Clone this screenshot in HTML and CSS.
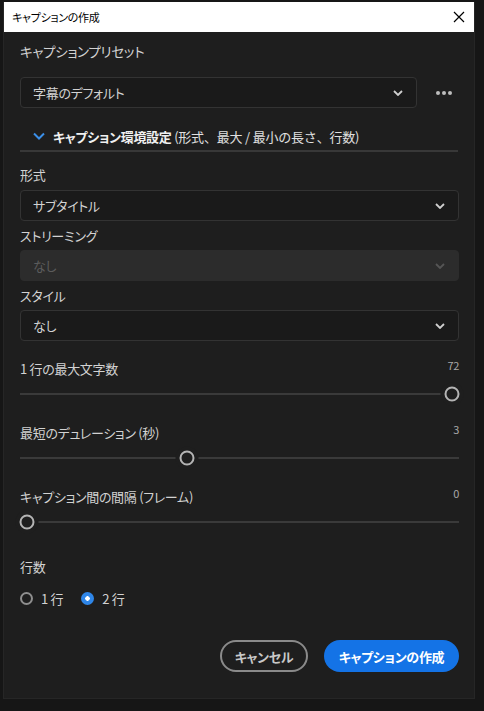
FILE: index.html
```html
<!DOCTYPE html>
<html lang="ja">
<head>
  <meta charset="UTF-8">
  <title>キャプションの作成</title>
  <link rel="stylesheet" href="styles.css">
</head>
<body>

  <div class="dialog">
    <div class="titlebar">
      <span>キャプションの作成</span>
      <svg class="close" width="12" height="12" viewBox="0 0 12 12">
        <path d="M1 1 L11 11 M11 1 L1 11" stroke="#000" stroke-width="1.2"/>
      </svg>
    </div>

    <div class="content">
      <div class="label preset-label">キャプションプリセット</div>
      <div class="preset-row">
        <div class="select preset-select">
          <span>字幕のデフォルト</span>
          <svg class="chev" width="10" height="6" viewBox="0 0 10 6"><path d="M1 1 L5 5 L9 1" fill="none" stroke="#d0d0d0" stroke-width="1.8"/></svg>
        </div>
        <div class="more"><i></i><i></i><i></i></div>
      </div>

      <div class="section-head">
        <svg width="12" height="8" viewBox="0 0 12 8"><path d="M1 1.5 L6 6.5 L11 1.5" fill="none" stroke="#3b8fe8" stroke-width="2"/></svg>
        <span><b>キャプション環境設定</b> <span class="hint">(形式、最大 / 最小の長さ、行数)</span></span>
      </div>

      <div class="label field-label">形式</div>
      <div class="select">
        <span>サブタイトル</span>
        <svg class="chev" width="10" height="6" viewBox="0 0 10 6"><path d="M1 1 L5 5 L9 1" fill="none" stroke="#d0d0d0" stroke-width="1.8"/></svg>
      </div>

      <div class="label field-label">ストリーミング</div>
      <div class="select disabled">
        <span>なし</span>
        <svg class="chev" width="10" height="6" viewBox="0 0 10 6"><path d="M1 1 L5 5 L9 1" fill="none" stroke="#555" stroke-width="1.8"/></svg>
      </div>

      <div class="label field-label">スタイル</div>
      <div class="select">
        <span>なし</span>
        <svg class="chev" width="10" height="6" viewBox="0 0 10 6"><path d="M1 1 L5 5 L9 1" fill="none" stroke="#d0d0d0" stroke-width="1.8"/></svg>
      </div>

      <div class="slider-block first">
        <div class="slider-head"><span>1 行の最大文字数</span><span class="val">72</span></div>
        <div class="slider"><div class="rail"><div class="thumb" style="left: 100%"></div></div></div>
      </div>

      <div class="slider-block">
        <div class="slider-head"><span>最短のデュレーション (秒)</span><span class="val">3</span></div>
        <div class="slider"><div class="rail"><div class="thumb" style="left: 37.6%"></div></div></div>
      </div>

      <div class="slider-block">
        <div class="slider-head"><span>キャプション間の間隔 (フレーム)</span><span class="val">0</span></div>
        <div class="slider"><div class="rail"><div class="thumb" style="left: 0%"></div></div></div>
      </div>

      <div class="label lines-label">行数</div>
      <div class="radios">
        <label class="radio"><span class="dot"></span>1 行</label>
        <label class="radio checked"><span class="dot"></span>2 行</label>
      </div>

      <div class="buttons">
        <button class="btn cancel">キャンセル</button>
        <button class="btn primary">キャプションの作成</button>
      </div>
    </div>
  </div>

</body>
</html>
```

FILE: styles.css
```css
body {
  margin: 0;
  background: #161616;
  font-family: "Noto Sans CJK JP", "Noto Sans", sans-serif;
  font-feature-settings: "palt";
  color: #d2d2d2;
  font-size: 13px;
  letter-spacing: -0.3px;
}

.dialog {
  margin: 2px 0 0 3px;
  width: 472px;
  height: 697px;
  background: #1e1e1e;
  border: 1px solid #262626;
  border-top: none;
  box-sizing: border-box;
}

.titlebar {
  height: 30px;
  background: #fff;
  color: #000;
  font-size: 11px;
  display: flex;
  align-items: center;
  justify-content: space-between;
  padding: 0 9px 0 8px;
}

.content {
  padding: 0 15px 0 16px;
}

.label {
  height: 20px;
  line-height: 20px;
}

.preset-label {
  margin-top: 9px;
  font-size: 13.5px;
}

.preset-row {
  display: flex;
  align-items: center;
  margin-top: 16px;
}

.select {
  height: 31px;
  box-sizing: border-box;
  border: 1px solid #333;
  border-radius: 4px;
  background: #1a1a1a;
  display: flex;
  align-items: center;
  justify-content: space-between;
  padding: 0 13px 0 12px;
  font-size: 13px;
}

.preset-select {
  width: 397px;
}

.select.disabled {
  background: #2c2c2c;
  border-color: #2c2c2c;
  color: #5c5c5c;
}

.more {
  display: flex;
  gap: 2px;
  margin-left: 19px;
}

.more i {
  width: 4px;
  height: 4px;
  border-radius: 50%;
  background: #bdbdbd;
}

.section-head {
  margin-top: 14px;
  height: 28px;
  border-bottom: 2px solid #383838;
  display: flex;
  align-items: center;
  padding-left: 13px;
  gap: 8px;
  font-size: 13px;
  color: #e0e0e0;
  margin-right: 1px;
}

.section-head b {
  font-weight: 700;
  color: #f0f0f0;
}

.section-head .hint {
  font-feature-settings: normal;
  letter-spacing: -0.2px;
}

.field-label {
  margin-top: 5px;
  margin-bottom: 4px;
}

.section-head + .field-label {
  margin-top: 13px;
  margin-bottom: 5px;
}

.slider-block {
  margin-top: 28px;
}

.slider-block.first {
  margin-top: 18px;
}

.slider-head {
  display: flex;
  justify-content: space-between;
  height: 20px;
  line-height: 20px;
}

.slider-head .val {
  font-size: 11px;
  color: #a8a8a8;
  line-height: 13px;
}

/* full-width track, thumb travels inside the padded rail */
.slider {
  height: 2px;
  background: #3a3a3a;
  margin-top: 14px;
  padding: 0 7px;
}

.rail {
  position: relative;
  height: 2px;
}

.thumb {
  position: absolute;
  top: 50%;
  width: 11px;
  height: 11px;
  border: 2px solid #b4b4b4;
  border-radius: 50%;
  background: #1e1e1e;
  transform: translate(-50%, -50%);
  box-shadow: 0 0 0 4px #1e1e1e;
}

.lines-label {
  margin-top: 34px;
}

.radios {
  display: flex;
  gap: 18px;
  margin-top: 12px;
  height: 18px;
  align-items: center;
}

.radio {
  display: flex;
  align-items: center;
  gap: 8px;
}

.dot {
  width: 9px;
  height: 9px;
  border: 2px solid #8e8e8e;
  border-radius: 50%;
  box-sizing: content-box;
}

.radio.checked .dot {
  border-color: #2f86e8;
  background: radial-gradient(circle, #fff 0 2px, #2f86e8 2.5px);
}

.buttons {
  display: flex;
  justify-content: flex-end;
  gap: 16px;
  margin-top: 33px;
}

.btn {
  font-family: inherit;
  font-feature-settings: "palt";
  letter-spacing: -0.3px;
  font-size: 13px;
  font-weight: 700;
  height: 32px;
  border-radius: 16px;
  padding: 0;
  white-space: nowrap;
  cursor: pointer;
}

.cancel {
  background: transparent;
  border: 2px solid #8a8a8a;
  color: #c8c8c8;
  width: 88px;
}

.primary {
  background: #1473e6;
  border: none;
  color: #fff;
  width: 135px;
}
```
